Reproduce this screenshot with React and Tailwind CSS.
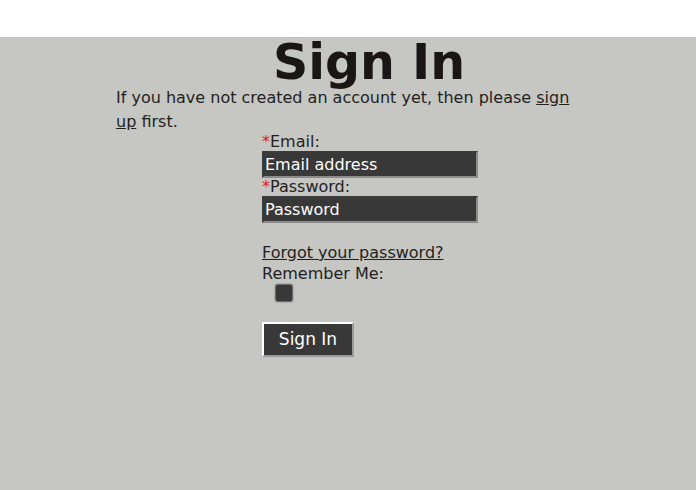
export default function App() {
  return (
    <div className="min-h-screen bg-white font-['DejaVu_Sans',Verdana,sans-serif] text-[#231f1f]">
      <div className="h-[37px] bg-white" />
      <div className="h-[453px] bg-[#c6c6c2]">
        <div className="ml-[116px] w-[506px]">
          <h1 className="text-center text-[49px] font-bold leading-[44px] pt-[4px] text-[#1a1616]">Sign In</h1>
          <p className="w-[462px] text-[16px] leading-[24px] mt-[1px]">
            If you have not created an account yet, then please <a href="#" className="underline">sign up</a> first.
          </p>
          <form className="ml-[146px] text-[16px]">
            <label className="block leading-[18px] mt-[-1px]">
              <span className="text-[#e0201a]">*</span>Email:
            </label>
            <input
              type="text"
              placeholder="Email address"
              className="block w-[216px] h-[27px] bg-[#383838] border-2 border-t-[#3a3a3a] border-l-[#3a3a3a] border-r-[#8c8c8a] border-b-[#8c8c8a] px-[1px] text-[16px] text-white placeholder:text-white outline-none"
            />
            <label className="block leading-[18px]">
              <span className="text-[#e0201a]">*</span>Password:
            </label>
            <input
              type="password"
              placeholder="Password"
              className="block w-[216px] h-[27px] bg-[#383838] border-2 border-t-[#3a3a3a] border-l-[#3a3a3a] border-r-[#8c8c8a] border-b-[#8c8c8a] px-[1px] text-[16px] text-white placeholder:text-white outline-none"
            />
            <a href="#" className="block mt-[19px] leading-[21px] underline">Forgot your password?</a>
            <div className="leading-[21px]">Remember Me:</div>
            <div className="ml-[13px] w-[18px] h-[18px] rounded-[3px] bg-[#383838] border border-[#6a6a68] shadow-[0_0_2px_#777]" />
            <button
              type="button"
              className="block mt-[20px] w-[92px] h-[35px] bg-[#383838] text-white text-[17px] border-2 border-t-white border-l-white border-r-[#9a9a98] border-b-[#9a9a98]"
            >
              Sign In
            </button>
          </form>
        </div>
      </div>
    </div>
  );
}
